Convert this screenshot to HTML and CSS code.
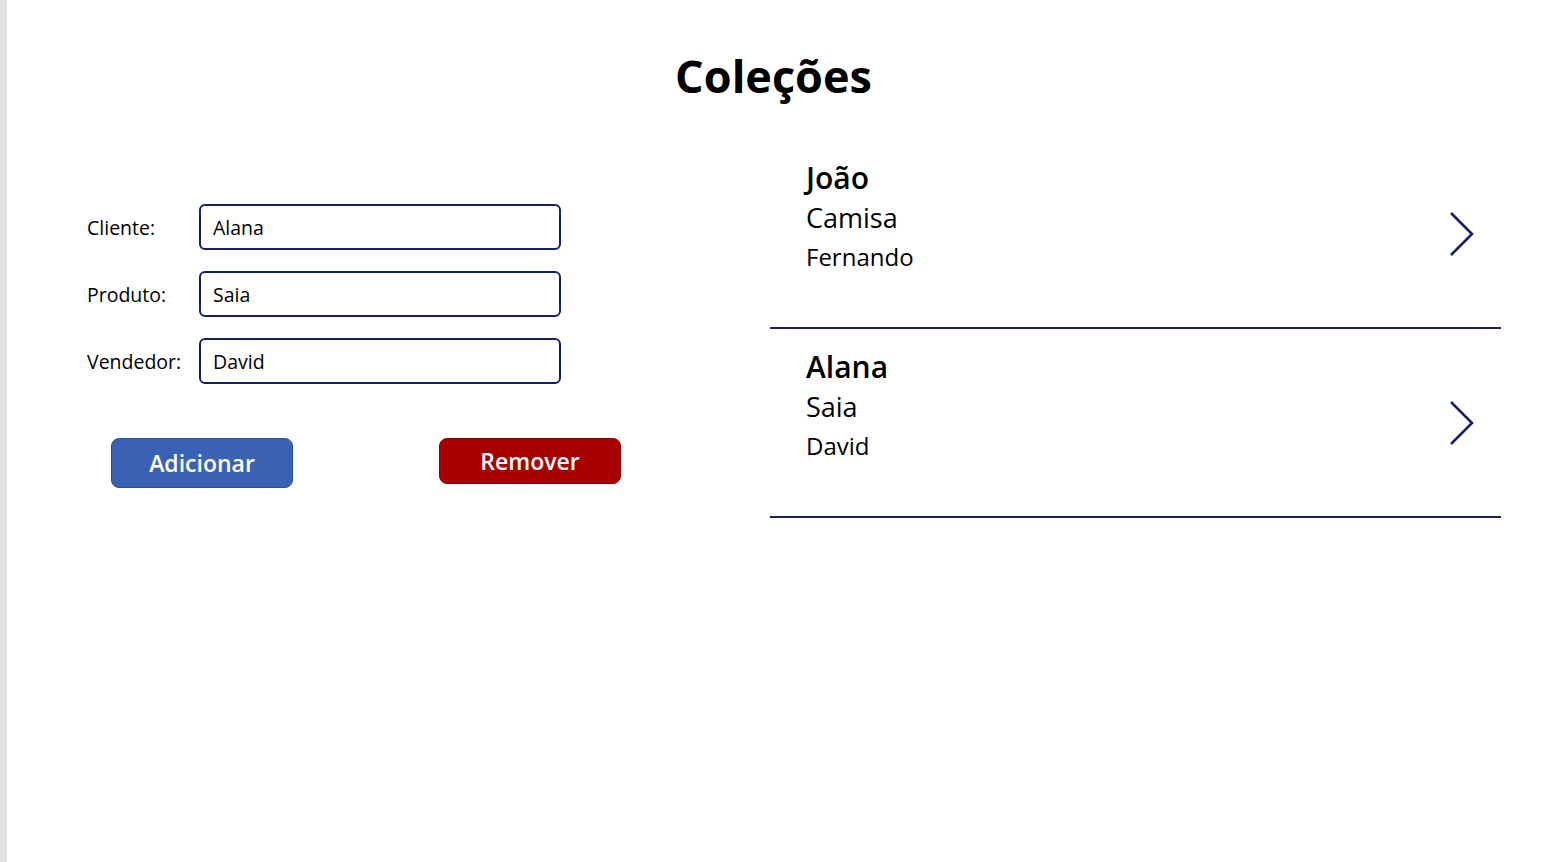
FILE: index.html
```html
<!DOCTYPE html>
<html lang="pt">

<head>
    <meta charset="UTF-8" />
    <meta name="viewport" content="width=device-width, initial-scale=1.0" />
    <title>Coleções</title>

    <link rel="stylesheet" href="styles.css">

</head>

<body>
    <div class="screen">
        <h1 class="title">Coleções</h1>

        <div class="content">
            <form class="form-panel" id="colForm">
                <div class="form-row">
                    <label for="cliente">Cliente:</label>
                    <input type="text" id="cliente" name="cliente" value="Alana" />
                </div>
                <div class="form-row">
                    <label for="produto">Produto:</label>
                    <input type="text" id="produto" name="produto" value="Saia" />
                </div>
                <div class="form-row">
                    <label for="vendedor">Vendedor:</label>
                    <input type="text" id="vendedor" name="vendedor" value="David" />
                </div>

                <div class="button-row">
                    <button type="button" class="btn btn-add">Adicionar</button>
                    <button type="button" class="btn btn-remove">Remover</button>
                </div>
            </form>

            <ul class="gallery">
                <li class="gallery-item">
                    <div class="item-text">
                        <div class="item-name">João</div>
                        <div class="item-product">Camisa</div>
                        <div class="item-seller">Fernando</div>
                    </div>
                    <svg class="chevron" width="26" height="46" viewBox="0 0 26 46">
                        <path d="M2 2 L23 23 L2 44" fill="none" stroke="#15206a" stroke-width="2.6" />
                    </svg>
                </li>
                <li class="gallery-item">
                    <div class="item-text">
                        <div class="item-name">Alana</div>
                        <div class="item-product">Saia</div>
                        <div class="item-seller">David</div>
                    </div>
                    <svg class="chevron" width="26" height="46" viewBox="0 0 26 46">
                        <path d="M2 2 L23 23 L2 44" fill="none" stroke="#15206a" stroke-width="2.6" />
                    </svg>
                </li>
            </ul>
        </div>
    </div>
</body>

</html>
```

FILE: styles.css
```css
html,
body {
    height: 100%;
    margin: 0;
    padding: 0;
}

body {
    font-family: "Open Sans", "Noto Sans", sans-serif;
    color: #000;
    background: #fff;
}

.screen {
    height: 100%;
    border-left: 7px solid #e1e1e1;
    box-sizing: border-box;
}

.title {
    margin: 0 0 0 -7px;
    padding-top: 46px;
    text-align: center;
    font-size: 45px;
    font-weight: 700;
    line-height: 60px;
}

.content {
    display: flex;
    align-items: flex-start;
    margin-top: 34px;
}

.form-panel {
    width: 763px;
    padding: 64px 0 0 80px;
    box-sizing: border-box;
}

.form-row {
    display: flex;
    align-items: center;
    margin-bottom: 21px;
}

.form-row label {
    width: 112px;
    font-size: 19.5px;
}

.form-row input[type="text"] {
    width: 362px;
    height: 46px;
    padding: 0 12px;
    box-sizing: border-box;
    border: 2px solid #15206a;
    border-radius: 6px;
    font-family: inherit;
    font-size: 19.5px;
    color: #000;
}

.button-row {
    display: flex;
    align-items: flex-start;
    gap: 146px;
    padding: 33px 0 0 24px;
}

.btn {
    width: 182px;
    border-radius: 8px;
    font-family: inherit;
    font-size: 23px;
    font-weight: 600;
    color: #fff;
    cursor: pointer;
}

.btn-add {
    height: 50px;
    background: #3a62b4;
    border: 1px solid #2c4f9c;
}

.btn-remove {
    height: 46px;
    background: #a80000;
    border: 1px solid #8a0000;
}

.gallery {
    list-style: none;
    margin: 0;
    padding: 0;
    width: 731px;
}

.gallery-item {
    display: flex;
    align-items: center;
    justify-content: space-between;
    height: 189px;
    padding: 0 26px 0 36px;
    box-sizing: border-box;
    border-bottom: 2px solid #1a2064;
}

.item-text {
    padding-bottom: 34px;
}

.item-name {
    font-size: 30px;
    font-weight: 600;
    line-height: 40px;
}

.item-product {
    font-size: 27px;
    line-height: 40px;
}

.item-seller {
    font-size: 24px;
    line-height: 38px;
}
```
